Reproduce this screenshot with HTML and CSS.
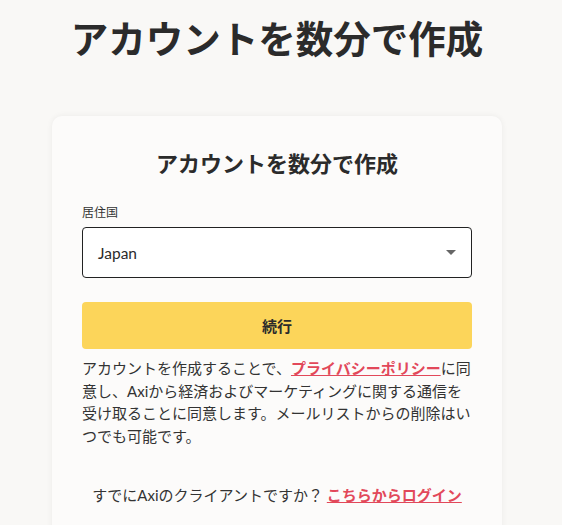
FILE: index.html
```html
<!DOCTYPE html>
<html lang="ja">

<head>
    <meta charset="UTF-8">
    <meta name="viewport" content="width=device-width, initial-scale=1.0">
    <link rel="stylesheet" href="styles.css">
    <title>アカウントを数分で作成</title>
</head>

<body>
    <div class="page">
        <h1 class="pagetitle">アカウントを数分で作成</h1>

        <div class="card">
            <h2 class="cardtitle">アカウントを数分で作成</h2>

            <div class="field">
                <label class="fieldlabel">居住国</label>
                <div class="select">
                    <span>Japan</span>
                    <span class="arrow"></span>
                </div>
            </div>

            <button class="btn">続行</button>

            <p class="consent">アカウントを作成することで、<a href="#">プライバシーポリシー</a>に同意し、Axiから経済およびマーケティングに関する通信を受け取ることに同意します。メールリストからの削除はいつでも可能です。</p>

            <p class="loginrow">すでにAxiのクライアントですか？ <a href="#">こちらからログイン</a></p>
        </div>
    </div>
</body>

</html>
```

FILE: styles.css
```css
* {
    box-sizing: border-box;
}

body {
    margin: 0;
    background-color: #f9f8f6;
    color: #2b2b2b;
    font-family: Lato, "Noto Sans CJK JP", sans-serif;
}

.page {
    width: 554px;
}

.pagetitle {
    margin: 0;
    padding-top: 13px;
    text-align: center;
    font-size: 37.5px;
    line-height: 52px;
    font-weight: 700;
}

.card {
    margin: 51px 52px 0;
    padding: 26px 30px 40px;
    background-color: #fcfbfa;
    border-radius: 10px;
    box-shadow: 0 0 6px rgba(0, 0, 0, 0.06);
}

.cardtitle {
    margin: 0;
    text-align: center;
    font-size: 22px;
    line-height: 44px;
    font-weight: 700;
}

.field {
    margin-top: 18px;
}

.fieldlabel {
    display: block;
    font-size: 12px;
    line-height: 18px;
    color: #333;
    margin-bottom: 5px;
}

.select {
    display: flex;
    align-items: center;
    justify-content: space-between;
    height: 51px;
    padding: 0 15px;
    border: 1px solid #222;
    border-radius: 4px;
    background-color: #fff;
    font-size: 15.5px;
}

.arrow {
    width: 0;
    height: 0;
    border-left: 5px solid transparent;
    border-right: 5px solid transparent;
    border-top: 5px solid #666;
}

.btn {
    display: block;
    width: 100%;
    height: 47px;
    margin-top: 24px;
    border: none;
    border-radius: 4px;
    background-color: #fcd55a;
    color: #2b2b2b;
    font-family: inherit;
    font-size: 15px;
    font-weight: 700;
}

.consent {
    margin: 8px 0 0;
    font-size: 15px;
    line-height: 22.5px;
    color: #333;
}

a {
    color: #e2485a;
    font-weight: 700;
    text-decoration: underline;
}

.loginrow {
    margin: 37px 0 0;
    text-align: center;
    font-size: 15px;
    line-height: 22px;
    color: #333;
}
```
